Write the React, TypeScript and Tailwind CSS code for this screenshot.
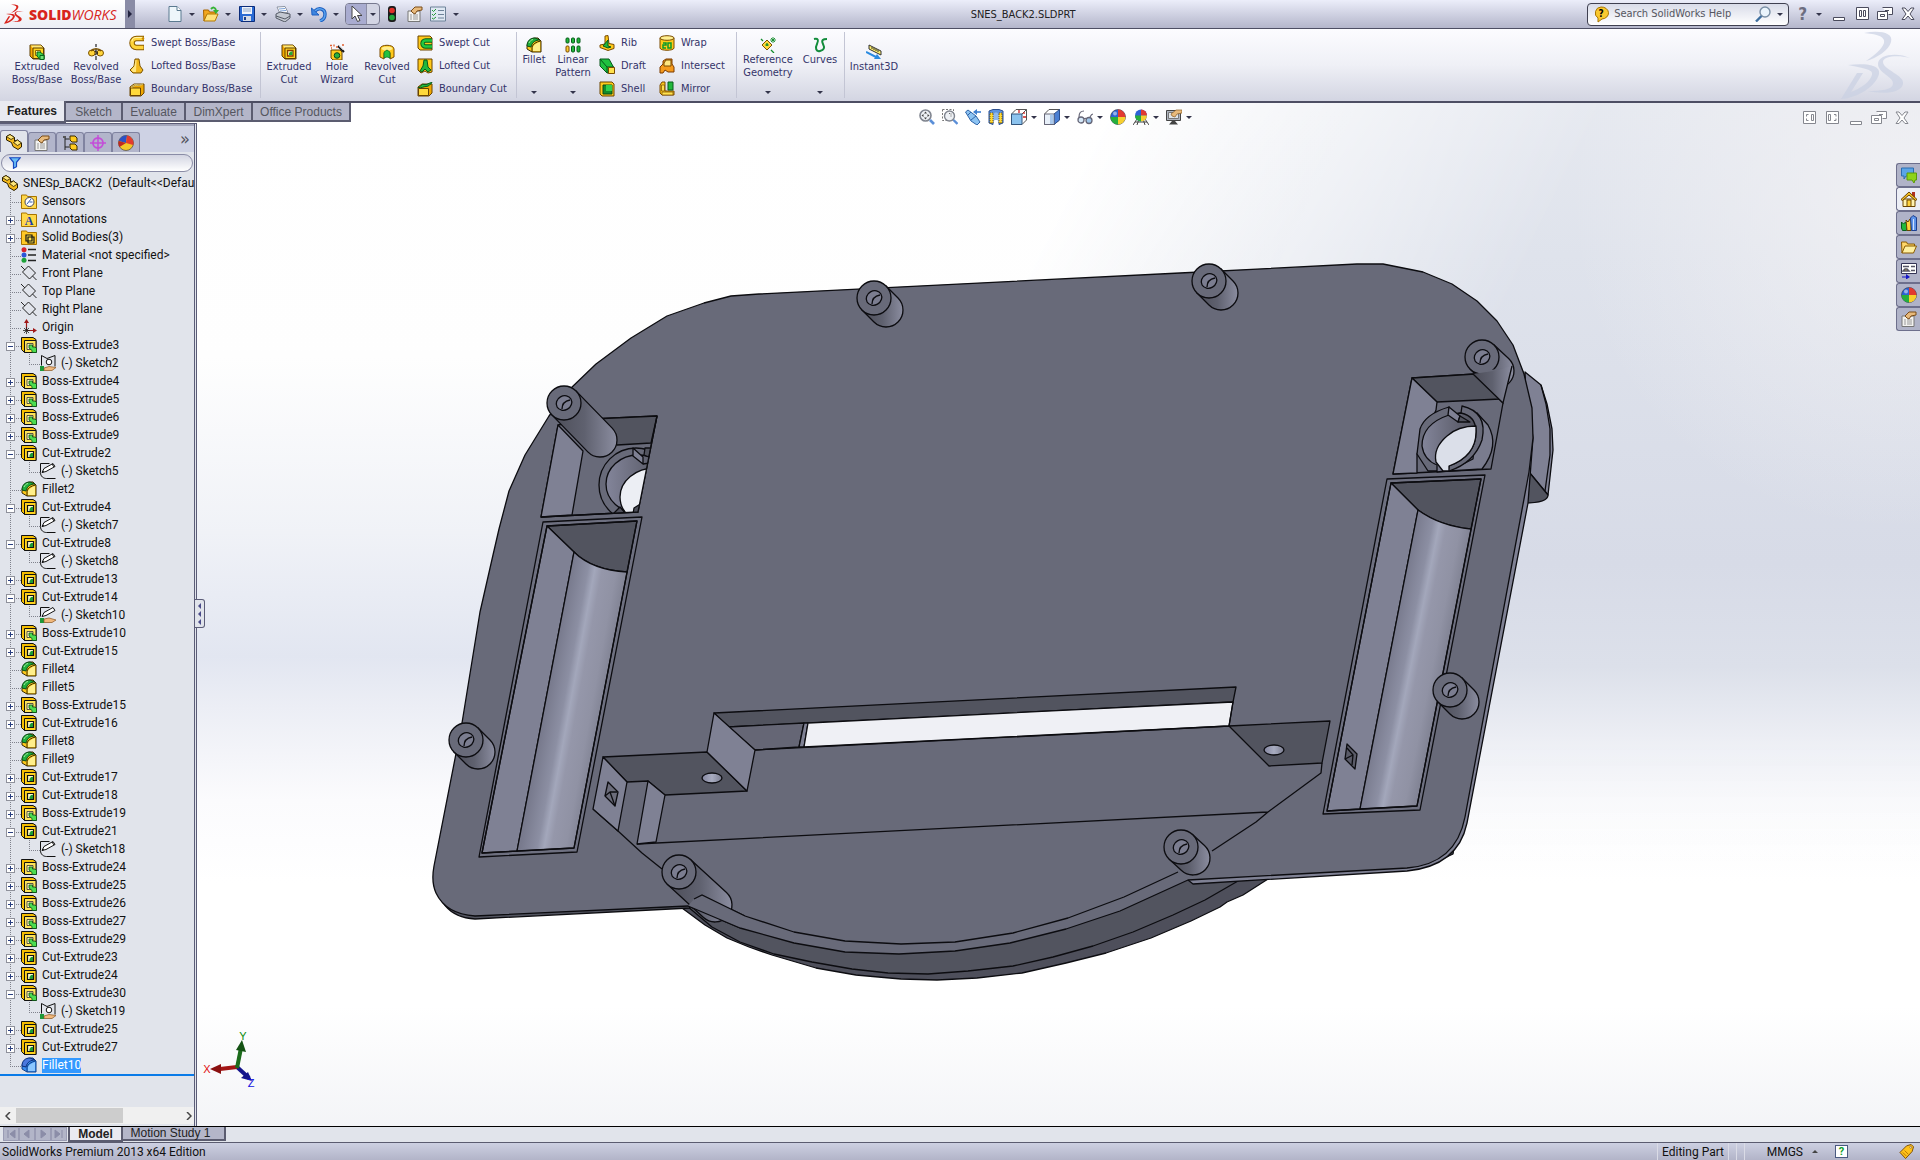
import { Fragment, useState } from "react";
import type { ReactNode } from "react";

type IconProps = { name: string; size?: number }

// all icons are drawn on a 16x16 grid
const icons: Record<string, ReactNode> = {
    bossExtrude: (
        <>
            <path d="M1 1h11l3 3v11H4L1 12z" fill="#f7a800" stroke="#5d3d00" />
            <path d="M1.500 1.500h10.500l2.500 2.500H4z" fill="#ffe97a" />
            <path d="M4 4h10.500v10.500H4z" fill="#ffd51f" stroke="#5d3d00" />
            <path d="M6.500 6.500h5v5h-5z" fill="#fff6a8" stroke="#8a6a00" />
            <path d="M8 8h3l4 3v4.500h-4L8 12z" fill="#3ccf4a" stroke="#06631a" />
            <path d="M11 11.500h4v4h-4z" fill="#6fe277" stroke="#06631a" />
        </>
    ),
    cutExtrude: (
        <>
            <path d="M1 1h11l3 3v11H4L1 12z" fill="#f7a800" stroke="#5d3d00" />
            <path d="M1.500 1.500h10.500l2.500 2.500H4z" fill="#ffe97a" />
            <path d="M4 4h10.500v10.500H4z" fill="#ffd51f" stroke="#5d3d00" />
            <path d="M6.500 6.500h5.500v5.500h-5.500z" fill="#fff3b0" stroke="#8a3d00" strokeWidth="1.300" />
            <path d="M8 9l2-1.500h1.500V11H8z" fill="#1fa83a" />
        </>
    ),
    treeBoss: (
        <>
            <path d="M.5 .5h11.500l3 2v13H3.500L.5 12.500z" fill="#f5bd00" stroke="#111" />
            <path d="M3.500 3.500h11.500v12H3.500z" fill="#ffe45a" stroke="#111" />
            <path d="M6 6.500h6v6h-6z" fill="#fff7b8" stroke="#333" strokeWidth=".8" />
            <path d="M8 8h3.500v2H14l1.500 1.500v4h-4.500v-2L8 11z" fill="#4ddd50" stroke="#0a4d12" strokeWidth=".8" />
        </>
    ),
    treeCut: (
        <>
            <path d="M.5 .5h11.500l3 2v13H3.500L.5 12.500z" fill="#f5bd00" stroke="#111" />
            <path d="M3.500 3.500h11.500v12H3.500z" fill="#ffd21c" stroke="#111" />
            <path d="M6.500 6.500h6v6h-6z" fill="#fff7c8" stroke="#111" strokeWidth="1.200" />
            <path d="M8.500 10l1.500-2h2v4H8.500z" fill="#1a9c33" />
        </>
    ),
    fillet: (
        <>
            <path d="M1 10c0-5 3-9 9-9h2l3 3v11H6L1 12z" fill="#ffc91a" stroke="#3a2a00" />
            <path d="M1 9c0-5 3-8 8-8l5 2c-4 0-8 2-9 7z" fill="#1fae3c" stroke="#0b4b18" />
            <path d="M3 6c1-2 2-3 4-3.500" stroke="#a5f0a0" fill="none" />
            <path d="M6 15V10c1-3 4-5 8.500-6" fill="none" stroke="#3a2a00" />
            <path d="M7 14v-4c1-2 3-4 7-5v9z" fill="#ffef8a" />
        </>
    ),
    filletBlue: (
        <>
            <path d="M1 10c0-5 3-9 9-9h2l3 3v11H6L1 12z" fill="#3b8ef0" stroke="#10408a" />
            <path d="M1 9c0-5 3-8 8-8l5 2c-4 0-8 2-9 7z" fill="#4b78dd" stroke="#0c2f78" />
            <path d="M6 15V10c1-3 4-5 8.500-6" fill="none" stroke="#10408a" />
            <path d="M7 14v-4c1-2 3-4 7-5v9z" fill="#8cc7ff" />
        </>
    ),
    revolve: (
        <>
            <path d="M8 0v3M8 5v5M8 12v4" stroke="#222" strokeWidth="1.200" />
            <ellipse cx="3.800" cy="9" rx="3.300" ry="3" fill="#ffd43a" stroke="#7a5200" />
            <ellipse cx="12.200" cy="9" rx="3.300" ry="3" fill="#ffd43a" stroke="#7a5200" />
            <path d="M3 7c2-3 8-3 10 0" fill="none" stroke="#7a5200" strokeWidth="1.600" />
            <path d="M7 7l3 2-3 2" fill="none" stroke="#222" />
        </>
    ),
    swept: (
        <>
            <path d="M15 3.500H7.500a4.500 4.500 0 0 0 0 9H15" fill="none" stroke="#8a5a00" strokeWidth="5.500" />
            <path d="M14.500 3.500H7.500a4.500 4.500 0 0 0 0 9h7" fill="none" stroke="#ffd43a" strokeWidth="3.500" />
            <path d="M14 2.500H7c-3 0-4 2-4 4" fill="none" stroke="#fff3a8" />
            <circle cx="14" cy="3.500" r="1.300" fill="#c98a00" />
        </>
    ),
    lofted: (
        <>
            <path d="M6 1h4l1 7 3 4-2 3H4l-3-3 4-4z" fill="#f2b81c" stroke="#7a5200" />
            <path d="M6.500 2h1l-.500 12H4l-2-2 3.500-4z" fill="#ffe680" />
        </>
    ),
    boundary: (
        <>
            <path d="M1 6l4-3h10v9l-3 3H1z" fill="#f0a800" stroke="#6a4400" />
            <path d="M1.500 7h10v7.500h-10z" fill="#ffd93b" stroke="#6a4400" />
            <path d="M2 6c3 0 3-3 6-2s4-1 6-1" fill="none" stroke="#fff09a" strokeWidth="1.500" />
            <path d="M2 6c3 0 3-3 6-2s4-1 6-1" fill="none" stroke="#6a4400" strokeWidth=".6" />
        </>
    ),
    hole: (
        <>
            <path d="M2 6h9l2 2v8H4l-2-2z" fill="#ffcb1f" stroke="#6a4400" />
            <circle cx="8" cy="11.500" r="2.800" fill="#29b33f" stroke="#06461a" />
            <path d="M9 2l6 6" stroke="#111" strokeWidth="2" />
            <path d="M10 2l4 4" stroke="#fff" strokeWidth=".6" />
            <path d="M1 1.500h2M5 .5v2M7 3h2M2 4h1M13 1h2" stroke="#e06030" strokeWidth="1.300" />
        </>
    ),
    revolveCut: (
        <>
            <path d="M1 5c0-5 14-5 14 0v8l-4 2V9L8 6 5 9v6l-4-2z" fill="#ffc91a" stroke="#7a4b00" />
            <ellipse cx="8" cy="4.500" rx="5.500" ry="2" fill="#ffee90" />
            <path d="M5 14V8l3-2 3 2v6l-3-1z" fill="#23c13f" stroke="#0b6a20" strokeWidth=".7" />
        </>
    ),
    sweptCut: (
        <>
            <path d="M1 1h12l2 2v12H3l-2-2z" fill="#ffc91a" stroke="#6a4400" />
            <path d="M15 5.500H8.500a3 3 0 0 0 0 6H15" fill="none" stroke="#075c1b" strokeWidth="4.400" />
            <path d="M15 5.500H8.500a3 3 0 0 0 0 6H15" fill="none" stroke="#22c840" strokeWidth="2.600" />
        </>
    ),
    loftedCut: (
        <>
            <path d="M1 1h14v13l-4 1-3-2-4 2-3-3z" fill="#ffc91a" stroke="#6a4400" />
            <path d="M7 2h3l1 7 3 3-3 2-3-3-3 3-2-1 3-5z" fill="#22b83c" stroke="#075c1b" />
        </>
    ),
    boundaryCut: (
        <>
            <path d="M1 6l4-3h10v9l-3 3H1z" fill="#f0a800" stroke="#6a4400" />
            <path d="M1.500 7.500h10v7h-10z" fill="#ffd93b" stroke="#6a4400" />
            <path d="M1 6.500c3 0 3-4 6-3s5-2 8-2c-2 2-3 4-6 4s-4 2-8 1z" fill="#25bd40" stroke="#075c1b" />
        </>
    ),
    pattern: (
        <>
            {[1, 6.500, 12].map(x => (
                <Fragment key={x}>
                    <rect x={x} y="1" width="3" height="5" rx="1" fill="#22b83c" stroke="#075c1b" />
                    <rect x={x} y="9" width="3" height="6" rx="1" fill={x === 1 ? "#ffcc33" : "#22b83c"} stroke={x === 1 ? "#7a4b00" : "#075c1b"} />
                </Fragment>
            ))}
        </>
    ),
    rib: (
        <>
            <path d="M1 10l5-1V1l3-.500 1 8 5 1v4l-6 2-8-3z" fill="#ffc91a" stroke="#7a4b00" />
            <path d="M4 11l5-6v6l3 1-3 1z" fill="#22b83c" stroke="#075c1b" />
        </>
    ),
    draft: (
        <>
            <path d="M1 1h9l5 9v5H8L1 8z" fill="#1fc23f" stroke="#06551a" />
            <path d="M1 1l7 8v6M8 9h7" fill="none" stroke="#06551a" />
            <path d="M9.500 9.500h6v6h-6z" fill="#ffe14d" stroke="#7a4b00" />
        </>
    ),
    shell: (
        <>
            <path d="M1 1h12l2 2v12H3l-2-2z" fill="#ffc91a" stroke="#6a4400" />
            <path d="M4 4h9v9H4z" fill="#128c2b" stroke="#0b4b18" />
            <path d="M7 4h6v6H7z" fill="#2fd04d" />
        </>
    ),
    wrap: (
        <>
            <path d="M1 3v10c0 3 14 3 14 0V3z" fill="#ffc91a" stroke="#7a4b00" />
            <ellipse cx="8" cy="3" rx="7" ry="2.300" fill="#ffef90" stroke="#7a4b00" />
            <path d="M4 8h3v2H4v3h3M9 8h3v5H9z" fill="none" stroke="#0b9a2a" strokeWidth="1.500" />
        </>
    ),
    intersect: (
        <>
            <path d="M1 9l3-3V3l3-2h6v5l2 3v5H9l-3-2-2 3H1z" fill="#f59a1c" stroke="#7a3a00" />
            <path d="M5 5l2-3h5v6H5z" fill="#ffe680" stroke="#7a4b00" />
        </>
    ),
    mirror: (
        <>
            <path d="M1 4l2-3h3v9h9v4H3l-2-2z" fill="#ffc91a" stroke="#7a4b00" />
            <path d="M9 1h5v8H9z" fill="#22b83c" stroke="#075c1b" />
            <path d="M2.500 4h3v6h-3zM3 11h11v3H3z" fill="#ffe14d" stroke="#7a4b00" strokeWidth=".7" />
        </>
    ),
    refGeo: (
        <>
            <path d="M7 3l5 5-5 5-5-5z" fill="#ffd83b" stroke="#7a5200" />
            <path d="M1 2l2 2M11 13l3 3M7 6v3M5.500 8h3" stroke="#128c2b" strokeWidth="1.300" />
            <path d="M13 0v6M10 3h6M11 1l4 4M15 1l-4 4" stroke="#128c2b" strokeWidth=".9" />
        </>
    ),
    curves: <path d="M2 2c4-1 5 1 3 5s-1 8 3 7 5-3 3-7 0-5 4-5" fill="none" stroke="#128c3b" strokeWidth="2" />,
    instant3d: (
        <>
            <path d="M3 1l12 6v4L3 5z" fill="#fff06a" stroke="#333" />
            <path d="M6 3v2M8 4v2M10 5v2M12 6v2" stroke="#333" />
            <path d="M0 8l10 5" stroke="#2a8ae0" strokeWidth="2" />
            <path d="M15 15l-7 0 3-5z" fill="#2a8ae0" />
        </>
    ),
    newDoc: (
        <>
            <path d="M2 .5h8l4 4v11H2z" fill="#eef6fb" stroke="#5b7a90" />
            <path d="M10 .5v4h4" fill="#fff" stroke="#5b7a90" />
        </>
    ),
    open: (
        <>
            <path d="M.5 4h5l1 2h6v3H4l-3 6z" fill="#f2a71f" stroke="#a86400" />
            <path d="M4 8h11l-3 7H1z" fill="#ffe27a" stroke="#b57800" />
            <path d="M8 3c2-2 4-2 5 1" fill="none" stroke="#35b335" strokeWidth="2" />
            <path d="M10 4h6l-3 4z" fill="#35b335" />
        </>
    ),
    save: (
        <>
            <path d="M.5 .5h15v15H2l-1.500-1.500z" fill="#2a6bd4" stroke="#0b2c7a" />
            <path d="M3 1h10v7H3z" fill="#eef3fb" />
            <path d="M4 3h8M4 5h8" stroke="#8fa6c8" />
            <path d="M4 10h8v5H4z" fill="#d5dbe6" />
            <path d="M5 11h2v3H5z" fill="#1b3f8a" />
        </>
    ),
    print: (
        <>
            <path d="M2 1l8-.500 3 6-8 1z" fill="#fff" stroke="#8b93a3" />
            <path d="M4 3l6-.500M5 5l6-.500" stroke="#79a0d8" />
            <path d="M1 8l4-2 10 2v4l-5 4-9-4z" fill="#c3c8d1" stroke="#555b66" />
            <path d="M1 10l9 3 5-3" fill="none" stroke="#555b66" />
        </>
    ),
    undo: (
        <>
            <path d="M4 5c4-4 10-2 10 3 0 3-2 6-5 7" fill="none" stroke="#1e5fc0" strokeWidth="3.400" />
            <path d="M4 5c4-4 10-2 10 3 0 3-2 6-5 7" fill="none" stroke="#5aa4f0" strokeWidth="1.400" />
            <path d="M.5 2l.500 7h7z" fill="#3d86e0" stroke="#1e5fc0" />
        </>
    ),
    cursor: <path d="M4 0v13l3-3 2.500 5.500 2.500-1L9.500 9.500H14z" fill="#fff" stroke="#444" />,
    traffic: (
        <>
            <rect x="4" y="0" width="8" height="16" rx="3" fill="#1c1c1c" />
            <circle cx="8" cy="4.500" r="2.800" fill="#e0302a" />
            <circle cx="8" cy="11.500" r="2.800" fill="#22a83a" />
        </>
    ),
    props: (
        <>
            <path d="M1 5h12v10.500H1z" fill="#f2f2f0" stroke="#777" />
            <path d="M3 9h2M6 9h5M3 11h2M6 11h5M3 13h2M6 13h5" stroke="#999" />
            <path d="M4 5l4-4 7 0v3l-5 1-2 3-2-1z" fill="#e8ba7c" stroke="#7a4c18" />
        </>
    ),
    options: (
        <>
            <path d="M.5 1h15v14H.5z" fill="#dfe8f3" stroke="#6d8298" />
            <path d="M2 4l1.500 1.500L6 3M2 8l1.500 1.500L6 7M2 12l1.500 1L6 11" fill="none" stroke="#219a35" />
            <path d="M8 4.500h6M8 8.500h6M8 12h6" stroke="#6d8298" />
        </>
    ),
    part: (
        <>
            <path d="M.5 2.500L4 .5l4.500 3v3.500l3-1 4 3v4L12 15.500l-5-3-1.500-4L.5 6z" fill="#f3b81a" stroke="#2a1e00" />
            <path d="M.5 2.500L4 .5l4.500 3L5 5.500zM7.500 8.500l4-2.500 4 3-4 2.500z" fill="#ffe77a" stroke="#2a1e00" strokeWidth=".8" />
        </>
    ),
    config: (
        <>
            <path d="M3 1v14M3 4h4M3 12h4" stroke="#222" fill="none" />
            <path d="M8 1l5 0 2 2v4h-5l-2-2zM8 9l5 0 2 2v4h-5l-2-2z" fill="#ffcb1f" stroke="#3a2a00" />
            <path d="M1 1h3v2H1z" fill="#555" />
        </>
    ),
    target: (
        <>
            <circle cx="8" cy="8" r="5" fill="none" stroke="#c34fd8" strokeWidth="1.800" />
            <path d="M8 0v16M0 8h16" stroke="#c34fd8" strokeWidth="1.500" />
        </>
    ),
    ball: (
        <>
            <circle cx="8" cy="8" r="7.500" fill="#2c62d6" stroke="#333" strokeWidth=".6" />
            <path d="M8 8V.5A7.500 7.500 0 0 1 15.500 8z" fill="#e23a30" />
            <path d="M8 8h7.500A7.500 7.500 0 0 1 8 15.500z" fill="#f7cf2f" />
            <path d="M8 8v7.500A7.500 7.500 0 0 1 .5 8z" fill="#27ae3d" />
            <circle cx="5" cy="4.500" r="2" fill="#fff" opacity=".5" />
        </>
    ),
    displayBall: (
        <>
            <circle cx="8" cy="8" r="7.500" fill="#f3c72a" stroke="#333" strokeWidth=".6" />
            <path d="M8 8L.8 6A7.500 7.500 0 0 1 9 .6z" fill="#2c50c6" />
            <path d="M8 8L9 .6A7.500 7.500 0 0 1 15.200 10z" fill="#e23a30" />
            <path d="M8 8L1.500 12A7.500 7.500 0 0 1 .8 6z" fill="#c02820" />
        </>
    ),
    scene: (
        <>
            <path d="M0 16l4-6h8l4 6M2 13h12M6 10l-2 6M10 10l2 6" fill="none" stroke="#444" />
            <circle cx="8" cy="6.500" r="6" fill="#2c62d6" />
            <path d="M8 6.500V.5a6 6 0 0 1 6 6z" fill="#e23a30" />
            <path d="M8 6.500h6a6 6 0 0 1-6 6z" fill="#f7cf2f" />
            <path d="M8 6.500v6a6 6 0 0 1-6-6z" fill="#27ae3d" />
        </>
    ),
    sensors: (
        <>
            <path d="M.5 2h5l1 1.500h9v12H.5z" fill="#ffd84a" stroke="#a87400" />
            <circle cx="8.500" cy="9" r="4.500" fill="#fff" stroke="#445" />
            <path d="M6 11l4-5M8.500 9l3 0" stroke="#2a58b0" />
        </>
    ),
    annotations: (
        <>
            <path d="M.5 2h5l1 1.500h9v12H.5z" fill="#ffd84a" stroke="#a87400" />
            <text x="8" y="14" textAnchor="middle" fontSize="12" fontWeight="700" fill="#1b3fa8" className="font-['Liberation_Serif',serif]">A</text>
        </>
    ),
    solidBodies: (
        <>
            <path d="M.5 2h5l1 1.500h9v12H.5z" fill="#ffc926" stroke="#a87400" />
            <path d="M5 6h6v6H5zM7 8h6v6H7z" fill="#ffe34d" stroke="#111" strokeWidth="1.200" />
        </>
    ),
    material: (
        <>
            <path d="M7 2.500h8M7 8h8M7 13.500h8" stroke="#222" strokeWidth="1.400" />
            <circle cx="3" cy="2.800" r="2.500" fill="#d8232a" />
            <circle cx="3" cy="8" r="2.500" fill="#2b55d8" />
            <circle cx="3" cy="13.200" r="2.500" fill="#1ea23a" />
        </>
    ),
    plane: <path d="M1.500 7l6-6 7 7-6 6zM0 1l4 4M11.500 11l4 4" fill="none" stroke="#222" />,
    origin: (
        <>
            <path d="M5.500 11V2M5.500 11.500H13" stroke="#a01818" strokeWidth="1.200" />
            <path d="M5.500 0L8 4H3zM16 11.500L12 9v5z" fill="#a01818" />
            <path d="M3 9l5 5M8 9l-5 5M5.500 8v7M2 11.500h7" stroke="#222" strokeWidth=".8" />
        </>
    ),
    sketch: (
        <>
            <path d="M.5 .5h9M.5 .5v9c0 4 3 6 6 6h9" fill="none" stroke="#111" />
            <path d="M2 9.500l2-4L13 .5l2 3-9 5z" fill="#fff" stroke="#111" />
            <path d="M12 1l2 3M2 9.500l2-1" stroke="#111" />
        </>
    ),
    sketchHeld: (
        <>
            <path d="M.5 .5h9M.5 .5v9" fill="none" stroke="#111" />
            <path d="M2 9.500l2-4L13 .5l2 3-9 5z" fill="#fff" stroke="#111" />
            <path d="M0 11h4v5H0z" fill="#1d9a3a" />
            <path d="M4 12l5-1 7 2-4 2.500H4z" fill="#f1b97d" stroke="#8a5420" strokeWidth=".7" />
        </>
    ),
    sketchShared: (
        <>
            <path d="M1.500 .5l5.500 3 8-3v11M1.500 .5v10" fill="none" stroke="#111" />
            <circle cx="9" cy="7" r="2.800" fill="#fff" stroke="#111" />
            <path d="M0 11h4v5H0z" fill="#1d9a3a" />
            <path d="M4 13l5-1.500 7 1-4 3H4z" fill="#f1b97d" stroke="#8a5420" strokeWidth=".7" />
        </>
    ),
    zoomFit: (
        <>
            <circle cx="6.500" cy="6.500" r="5.500" fill="#eef1f5" stroke="#80858f" strokeWidth="1.600" />
            <path d="M6.500 2.500l1.500 2H5zM6.500 10.500l1.500-2H5zM2.500 6.500l2-1.500v3zM10.500 6.500l-2-1.500v3z" fill="#444" />
            <path d="M11 11l4 4" stroke="#5b8fd8" strokeWidth="2.600" />
        </>
    ),
    zoomArea: (
        <>
            <path d="M.5 .5h11v11H.5z" fill="none" stroke="#777" strokeDasharray="2 1.500" />
            <circle cx="7.500" cy="7" r="5" fill="#eef1f5" stroke="#80858f" strokeWidth="1.400" />
            <path d="M7 4.500h2v4" stroke="#666" fill="none" strokeDasharray="1 1" />
            <path d="M11.500 11l4 4" stroke="#5b8fd8" strokeWidth="2.400" />
        </>
    ),
    prevView: (
        <>
            <path d="M.5 3L3 1l8 6 4 6-3 3-6-4z" fill="#8cc3f2" stroke="#2f64a8" />
            <path d="M3 6l3-3M6 11l5-4" stroke="#2f64a8" />
            <path d="M16 3h-5" stroke="#3d7fd0" strokeWidth="1.600" />
            <path d="M8 3l4-3v6z" fill="#3d7fd0" />
        </>
    ),
    section: (
        <>
            <path d="M1 2l4-1.500h6L15 2v12l-4 1.500V5H5v10.500L1 14z" fill="#5d93dd" stroke="#2b4f8f" />
            <path d="M5 5l2-1.500h2L11 5v7l-2-1H7l-2 1z" fill="#8fb8ea" />
            <path d="M2 4h3v10H2zM11 4h3v10h-3z" fill="#ffd936" stroke="#7a5a00" strokeDasharray="1 1" />
        </>
    ),
    viewOrient: (
        <>
            <path d="M.5 5l4.500-4.500h10.500V11L11 15.500H.5z" fill="#fff" stroke="#555" />
            <path d="M.5 5H11v10.500H.5z" fill="#8cc3ee" stroke="#33557c" />
            <path d="M11 5l4.500-4.500" stroke="#555" />
            <path d="M8 1v3M12 8h3M13 3v2" stroke="#c22" strokeWidth="1.300" />
        </>
    ),
    displayStyle: (
        <>
            <path d="M.5 5l4.500-4.500h10.500V11L10 15.500H.5z" fill="#fff" stroke="#555" />
            <path d="M10 5l5.500-4.500V11L10 15.500z" fill="#4a7fd4" stroke="#2b4f8f" />
            <path d="M.5 5H10v10.500H.5z" fill="#e8f0f9" stroke="#667" />
            <path d="M6 5.500h3.500V15H6z" fill="#a9c8ec" />
        </>
    ),
    glasses: (
        <>
            <circle cx="4" cy="11" r="3" fill="#d4e8f8" stroke="#667" strokeWidth="1.300" />
            <circle cx="12" cy="11.500" r="3" fill="#9ec6ea" stroke="#667" strokeWidth="1.300" />
            <path d="M7 10c1-1 2-1 2 0M2 8c0-4 2-6 5-6M13 8c1-2 2-3 3-3" fill="none" stroke="#667" strokeWidth="1.200" />
        </>
    ),
    monitor: (
        <>
            <path d="M.5 1.500h14v10H.5z" fill="#aeb4bf" stroke="#444" />
            <path d="M2.500 3.500h10v6h-10z" fill="#dfe4ea" stroke="#777" />
            <path d="M3 15.500l3-3.500h3l3 3.500z" fill="#444" />
            <path d="M5 5l5-4h6v3l-5 1-2 3-3-1z" fill="#e8ba7c" stroke="#8a5a20" strokeWidth=".7" />
        </>
    ),
    forum: (
        <>
            <path d="M.5 1h12v8H5l-2 3V9H.5z" fill="#5ba5e6" stroke="#2b6db0" />
            <path d="M6 6h9.500v7H14l-1 3-2-3H6z" fill="#8ed31a" stroke="#5a9a08" />
        </>
    ),
    home: (
        <>
            <path d="M11 1h3v5h-3z" fill="#b03020" />
            <path d="M2 8h12v7.500H2z" fill="#fff3b0" stroke="#6a4400" />
            <path d="M0 8.500L8 1l8 7.500-1.500 1L8 4 1.500 9.500z" fill="#f7c024" stroke="#6a4400" />
            <path d="M6 9h4v6.500H6z" fill="#ffd23a" stroke="#6a4400" />
        </>
    ),
    library: (
        <>
            <path d="M.5 7l2 2 2-2 1 2v6.500h-4L.5 13z" fill="#22b83c" stroke="#075c1b" />
            <path d="M5 5l2 2 2-3 1 2v9.500H6z" fill="#ffd23a" stroke="#6a4400" />
            <path d="M9.500 3L12 .5l3.500 2v13h-5z" fill="#5d93e8" stroke="#1d3f8f" />
            <path d="M12.500 4v11" stroke="#cfe0ff" />
        </>
    ),
    folder: (
        <>
            <path d="M.5 3h5l1 2h7v4H4l-3 5z" fill="#ffd76a" stroke="#8a5a00" />
            <path d="M4 7h11.500l-3 7H1z" fill="#fff0a0" stroke="#8a5a00" />
        </>
    ),
    palette: (
        <>
            <path d="M.5 .5h15v10H.5z" fill="#fff" stroke="#335" />
            <path d="M2 3.500h6M10 3.500h4M2 8l2-2 2 0 2 2zM10 7.500h4" stroke="#556" strokeWidth="1.500" fill="#ffd23a" />
            <path d="M1 13.500h4V11l4 3-4 2.500v-2H1z" fill="#1616c8" />
        </>
    ),
    search: (
        <>
            <circle cx="10" cy="6" r="5" fill="#eaf4fc" stroke="#7a8fa5" strokeWidth="1.400" />
            <path d="M6.500 10L1 15.500" stroke="#3f6f9f" strokeWidth="2.400" />
        </>
    ),
    tag: (
        <>
            <path d="M1 9l7-7 5-1.500L15.500 3 14 8l-7 7.500z" fill="#ffc21a" stroke="#7a4b00" />
            <circle cx="12.500" cy="3.500" r="1" fill="#fff" stroke="#7a4b00" strokeWidth=".6" />
            <path d="M4 9l4 4M6 7l4 4" stroke="#b37400" />
        </>
    ),
    funnel: <path d="M1 1h14l-5 6v6l-4 2V7z" fill="#69bdf5" stroke="#1748c0" strokeWidth="1.600" />,
    min: <path d="M2.500 11.500h11v3h-11z" fill="#fff" stroke="currentColor" />,
    pause: <path d="M2.500 1.500h12v12h-12zM5.500 4.500h2v6h-2zM9.500 4.500h2v6h-2z" fill="#fff" stroke="currentColor" />,
    restore: <path d="M5.500 1.500h10v7h-4M.5 5.500h10v8H.5zM3.500 8.500h4v2h-4zM8 4.500h4" fill="#fff" stroke="currentColor" />,
    close: <path d="M2 2h3l3 3.500L11 2h3l-4 6 4 5.500h-3L8 10l-3 3.500H2L6 8z" fill="#fff" stroke="currentColor" />,
    paneLeft: <path d="M1.500 1.500h12v12h-12zM6.500 4.500h-2v2M6.500 10.500h-2v-2M9.500 4.500h2v6h-2z" fill="#fff" stroke="currentColor" />,
    paneRight: <path d="M1.500 1.500h12v12h-12zM3.500 4.500h2v6h-2zM9 4.500h2v2M9 10.500h2v-2" fill="#fff" stroke="currentColor" />,
}

const Icon = ({ name, size = 16 }: IconProps) => (
    <svg width={size} height={size} viewBox="0 0 16 16" className="shrink-0" aria-hidden="true">
        {icons[name]}
    </svg>
)

const Caret = () => (
    <span className="h-0 w-0 shrink-0 border-x-[3px] border-t-[3px] border-x-transparent border-t-[#33344a]" />
)

/* ---------- title bar ---------- */

const DsMark = ({ className }: { className: string }) => (
    <svg viewBox="0 0 72 70" className={className} fill="currentColor" aria-hidden="true">
        <path d="M24 3c14-3 30-1 27 9-2 8-14 16-25 19 9-6 16-12 18-18 2-7-9-9-20-10z" />
        <path d="M8 35c16-2 33-1 31 9C36 56 18 68 1 69L17 43h6L11 62c10-4 19-10 21-17 2-6-10-7-24-10z" />
        <path d="M70 28c-12-3-27-2-27 4 0 8 22 13 20 22-2 10-22 10-35 7 13 0 24-1 25-7 1-7-15-11-15-20 0-10 20-12 32-6z" />
    </svg>
)

const fileTools = [
    { icon: "newDoc", label: "New" },
    { icon: "open", label: "Open" },
    { icon: "save", label: "Save" },
    { icon: "print", label: "Print" },
    { icon: "undo", label: "Undo" },
]

function TitleBar() {
    return (
        <header className="flex h-[29px] items-center border-b border-[#4d4e63] bg-linear-to-b from-[#eceefa] to-[#b4b6cb]">
            <div className="flex h-full w-[125px] items-center gap-[4px] bg-linear-to-b from-white to-[#eceef5] pl-[3px] text-[#d8251d]">
                <DsMark className="h-[20px] w-[22px]" />
                <p className="pt-[2px] font-['Open_Sans',sans-serif] text-[14px] leading-none">
                    <b className="font-extrabold">SOLID</b><i>WORKS</i>
                </p>
            </div>
            <button aria-label="Menu" className="flex h-full w-[10px] items-center justify-center bg-[#8a8ca6]">
                <span className="border-y-4 border-l-4 border-y-transparent border-l-[#22233f]" />
            </button>

            <div className="ml-[32px] flex items-center">
                {fileTools.map(tool => (
                    <button key={tool.icon} aria-label={tool.label} className="flex w-9 items-center gap-[6px]">
                        <Icon name={tool.icon} />
                        <Caret />
                    </button>
                ))}
                <div className="-ml-[2px] flex h-[22px] items-center rounded-[4px] border border-[#77798f] bg-[#d3d5e4]">
                    <button aria-label="Select" className="flex h-full w-[21px] items-center justify-center rounded-l-[3px] border-r border-[#8c8ea6] bg-[#a9acd0]">
                        <Icon name="cursor" />
                    </button>
                    <button aria-label="Select options" className="flex w-[12px] justify-center"><Caret /></button>
                </div>
                <div className="ml-[4px] flex items-center gap-[7px]">
                    <button aria-label="Rebuild"><Icon name="traffic" /></button>
                    <button aria-label="File properties"><Icon name="props" /></button>
                    <button aria-label="Options" className="flex items-center gap-[7px]">
                        <Icon name="options" />
                        <Caret />
                    </button>
                </div>
            </div>

            <h1 className="flex-1 pt-[2px] text-center text-[11px] text-[#222]">SNES_BACK2.SLDPRT</h1>

            <div className="flex h-[23px] w-[202px] items-center rounded-[4px] border border-[#3f4050] bg-linear-to-b from-[#d9dce9] to-white px-[5px]">
                <svg width="17" height="17" viewBox="0 0 17 17" aria-hidden="true">
                    <path d="M8 1a7 6 0 0 1 1 12l-4 3v-4A6 6 0 0 1 8 1z" fill="#f9c92f" stroke="#a87400" />
                    <text x="8" y="11" textAnchor="middle" fontSize="10" fontWeight="700">?</text>
                </svg>
                <input aria-label="Search SolidWorks Help" placeholder="Search SolidWorks Help" className="ml-[4px] min-w-0 flex-1 bg-transparent text-[11px] outline-none placeholder:text-[#55565f]" />
                <Icon name="search" />
                <span className="ml-[6px] flex"><Caret /></span>
            </div>

            <div className="mr-[4px] ml-[9px] flex items-center text-[#4a4b5c]">
                <button aria-label="Help" className="flex items-center gap-[9px] text-[17px] leading-none font-bold text-[#6d6e80]">
                    ?<Caret />
                </button>
                <div className="ml-[9px] flex items-center gap-[7px]">
                    <button aria-label="Minimize"><Icon name="min" /></button>
                    <button aria-label="Tile"><Icon name="pause" /></button>
                    <button aria-label="Restore"><Icon name="restore" /></button>
                    <button aria-label="Close"><Icon name="close" /></button>
                </div>
            </div>
        </header>
    )
}

/* ---------- ribbon ---------- */

type BigProps = { icon: string; lines: string[]; width: string; menu?: boolean }

const Big = ({ icon, lines, width, menu }: BigProps) => (
    <button className={`flex h-full flex-col items-center ${menu ? "pt-[8px]" : "pt-[15px]"} ${width}`}>
        <Icon name={icon} />
        <span className="text-center leading-[13px] whitespace-nowrap">
            {lines.map(line => <span key={line} className="block">{line}</span>)}
        </span>
        {menu && <span className="mt-auto mb-[7px] flex"><Caret /></span>}
    </button>
)

const Stack = ({ items, width }: { items: [string, string][]; width: string }) => (
    <div className={`flex flex-col gap-[7px] pt-[6px] ${width}`}>
        {items.map(([icon, label]) => (
            <button key={label} className="flex h-4 items-center gap-[6px] whitespace-nowrap">
                <Icon name={icon} />
                {label}
            </button>
        ))}
    </div>
)

const Separator = () => <div className="my-[3px] w-px shrink-0 bg-[#c3c5d4]" />

function Ribbon() {
    return (
        <div className="relative flex h-[74px] overflow-hidden border-b-2 border-[#4d4e63] bg-linear-to-b from-[#fcfcff] via-[#eff0f6] to-[#d3d5e2] pl-[8px] text-[11px] text-[#34346a]">
            <Big icon="bossExtrude" lines={["Extruded", "Boss/Base"]} width="w-[58px]" />
            <Big icon="revolve" lines={["Revolved", "Boss/Base"]} width="w-[60px]" />
            <Stack width="ml-[3px] w-[131px]" items={[["swept", "Swept Boss/Base"], ["lofted", "Lofted Boss/Base"], ["boundary", "Boundary Boss/Base"]]} />
            <Separator />
            <Big icon="cutExtrude" lines={["Extruded", "Cut"]} width="w-[56px]" />
            <Big icon="hole" lines={["Hole", "Wizard"]} width="w-[40px]" />
            <Big icon="revolveCut" lines={["Revolved", "Cut"]} width="w-[60px]" />
            <Stack width="w-[99px]" items={[["sweptCut", "Swept Cut"], ["loftedCut", "Lofted Cut"], ["boundaryCut", "Boundary Cut"]]} />
            <Separator />
            <Big icon="fillet" lines={["Fillet"]} width="w-[34px]" menu />
            <Big icon="pattern" lines={["Linear", "Pattern"]} width="w-[44px]" menu />
            <Stack width="ml-[4px] w-[60px]" items={[["rib", "Rib"], ["draft", "Draft"], ["shell", "Shell"]]} />
            <Stack width="w-[77px]" items={[["wrap", "Wrap"], ["intersect", "Intersect"], ["mirror", "Mirror"]]} />
            <Separator />
            <Big icon="refGeo" lines={["Reference", "Geometry"]} width="w-[62px]" menu />
            <Big icon="curves" lines={["Curves"]} width="w-[42px] mr-[3px]" menu />
            <Separator />
            <Big icon="instant3d" lines={["Instant3D"]} width="w-[58px]" />
            <DsMark className="mr-[8px] ml-auto h-[72px] w-[72px] text-[#c9d0e2]/70" />
        </div>
    )
}

/* ---------- feature tree ---------- */

type Node = { label: string; icon: string; box?: "+" | "-"; child?: boolean; selected?: boolean }

const boss = (n: number, box: "+" | "-" = "+"): Node => ({ label: `Boss-Extrude${n}`, icon: "treeBoss", box })
const cut = (n: number, box: "+" | "-" = "+"): Node => ({ label: `Cut-Extrude${n}`, icon: "treeCut", box })
const fillet = (n: number): Node => ({ label: `Fillet${n}`, icon: "fillet" })
const sketch = (n: number, icon = "sketch"): Node => ({ label: `(-) Sketch${n}`, icon, child: true })

const nodes: Node[] = [
    { label: "Sensors", icon: "sensors" },
    { label: "Annotations", icon: "annotations", box: "+" },
    { label: "Solid Bodies(3)", icon: "solidBodies", box: "+" },
    { label: "Material <not specified>", icon: "material" },
    { label: "Front Plane", icon: "plane" },
    { label: "Top Plane", icon: "plane" },
    { label: "Right Plane", icon: "plane" },
    { label: "Origin", icon: "origin" },
    boss(3, "-"), sketch(2, "sketchShared"),
    boss(4), boss(5), boss(6), boss(9),
    cut(2, "-"), sketch(5),
    fillet(2),
    cut(4, "-"), sketch(7),
    cut(8, "-"), sketch(8),
    cut(13),
    cut(14, "-"), sketch(10, "sketchHeld"),
    boss(10), cut(15), fillet(4), fillet(5),
    boss(15), cut(16), fillet(8), fillet(9),
    cut(17), cut(18), boss(19),
    cut(21, "-"), sketch(18),
    boss(24), boss(25), boss(26), boss(27), boss(29),
    cut(23), cut(24),
    boss(30, "-"), sketch(19, "sketchShared"),
    cut(25), cut(27),
    { label: "Fillet10", icon: "filletBlue", selected: true },
]

const Branch = ({ node }: { node: Node }) => (
    <svg width={node.child ? 40 : 21} height="18" className="shrink-0" aria-hidden="true">
        <path
            d={`M10.500 0V${node.selected ? 9 : 18}${node.child ? "M29.500 0V10M29 10.500H40" : "M10 10.500H21"}`}
            fill="none" stroke="#80828c" strokeDasharray="1 1"
        />
        {node.box && (
            <>
                <rect x="6.500" y="6.500" width="8" height="8" fill="#fff" stroke="#8f919b" />
                <path d={node.box === "+" ? "M8 10.500h5M10.500 8v5" : "M8 10.500h5"} stroke="#2a3f80" />
            </>
        )}
    </svg>
)

const panelTabs = ["part", "props", "config", "target", "displayBall"]

function FeatureManager() {
    const [active, setActive] = useState("part")

    return (
        <div className="relative flex min-h-0 flex-1 flex-col border-t border-r-[3px] border-double border-[#5b5c77] bg-[#e1e4eb]">
            <div className="flex h-[28px] items-end border-t-2 border-[#a3a6bb] bg-[#ced2e4]">
                {panelTabs.map(tab => (
                    <button
                        key={tab}
                        onClick={() => setActive(tab)}
                        aria-label={tab}
                        className={`flex w-[28px] items-center justify-center rounded-t-[3px] border border-b-0 border-[#8083a0] ${tab === active ? "h-[22px] bg-[#e1e4eb]" : "h-[20px] bg-[#b2b5cb]"}`}
                    >
                        <Icon name={tab} />
                    </button>
                ))}
                <button aria-label="More tabs" className="mr-[4px] ml-auto pb-[4px] text-[18px] leading-none text-[#55565f]">»</button>
            </div>

            <label className="mx-[1px] mt-[2px] flex h-[18px] items-center rounded-full border border-[#8a8ca6] bg-linear-to-b from-[#d3d5e2] to-white pl-[7px]">
                <Icon name="funnel" size={12} />
                <input aria-label="Filter" className="ml-1 min-w-0 flex-1 bg-transparent text-[12px] outline-none" />
            </label>

            <ul className="flex-1 overflow-hidden pt-[2px] font-['Roboto',sans-serif] text-[12px] text-[#111]">
                <li className="flex h-[18px] items-center gap-[5px] pl-[2px] whitespace-pre">
                    <Icon name="part" />
                    <span>SNESp_BACK2  (Default&lt;&lt;Defau</span>
                </li>
                {nodes.map(node => (
                    <li key={node.label} className="flex h-[18px] items-center whitespace-nowrap">
                        <Branch node={node} />
                        <Icon name={node.icon} />
                        <span className={node.selected ? "ml-[5px] bg-[#3399ff] leading-[15px] text-white" : "ml-[5px]"}>{node.label}</span>
                    </li>
                ))}
                <li className="h-[2px] bg-[#0a7be8]" />
            </ul>

            <div className="mb-[2px] flex h-[17px] items-center bg-[#f0f0f0] text-[#444]">
                <button aria-label="Scroll left" className="flex w-4 justify-center">
                    <svg width="6" height="8" viewBox="0 0 6 8"><path d="M5 0L1 4l4 4" fill="none" stroke="currentColor" strokeWidth="1.500" /></svg>
                </button>
                <div className="h-[15px] w-[107px] bg-[#cdcdcd]" />
                <button aria-label="Scroll right" className="ml-auto flex w-[11px] justify-center">
                    <svg width="6" height="8" viewBox="0 0 6 8"><path d="M1 0l4 4-4 4" fill="none" stroke="currentColor" strokeWidth="1.500" /></svg>
                </button>
            </div>

            <button aria-label="Collapse panel" className="absolute top-[475px] -right-[11px] z-10 flex h-[29px] w-[10px] flex-col items-center justify-center gap-[2px] rounded-r-[3px] border border-l-0 border-[#5b5c77] bg-[#e1e4eb]">
                {[0, 1, 2].map(i => <span key={i} className="border-y-[3px] border-r-[3px] border-y-transparent border-r-[#4a4b8a]" />)}
            </button>
        </div>
    )
}

/* ---------- model ---------- */

type PegProps = { x: number; y: number; dx?: number; dy?: number; r?: number }

// boss with a screw hole: hull of the face circle and its base
const Peg = ({ x, y, dx = 12, dy = 12, r = 17 }: PegProps) => {
    const len = Math.hypot(dx, dy)
    const nx = (-dy / len) * r
    const ny = (dx / len) * r

    return (
        <g stroke="#0c0c10" strokeWidth="1.300">
            <path
                d={`M${x - nx} ${y - ny}L${x + dx - nx} ${y + dy - ny}A${r} ${r} 0 0 1 ${x + dx + nx} ${y + dy + ny}L${x + nx} ${y + ny}z`}
                fill="url(#peg)"
            />
            <circle cx={x} cy={y} r={r} fill="#686a79" />
            <ellipse cx={x} cy={y} rx="8" ry="7" fill="#7b7d90" transform={`rotate(-30 ${x} ${y})`} />
            <path d={`M${x - 2} ${y + 6}c0-5 3-8 8-9`} fill="none" />
        </g>
    )
}

const MAIN = "#686a79"
const LIGHT = "#7f8194"
const DARK = "#52545f"

function Model() {
    return (
        <svg viewBox="197 103 1723 1023" preserveAspectRatio="xMidYMid slice" className="block h-full w-full" role="img" aria-label="Part model">
            <defs>
                <linearGradient id="band" x1="0" y1="0" x2="0" y2="1">
                    <stop offset="0" stopColor="#fff" />
                    <stop offset=".25" stopColor="#fefefe" />
                    <stop offset=".42" stopColor="#f0f2f7" />
                    <stop offset=".54" stopColor="#e2e6f1" />
                    <stop offset=".59" stopColor="#eceef5" />
                    <stop offset=".68" stopColor="#fbfbfd" />
                    <stop offset=".76" stopColor="#fff" />
                    <stop offset=".88" stopColor="#fff" />
                    <stop offset="1" stopColor="#f3f4f7" />
                </linearGradient>
                <linearGradient id="sky" x1="0" y1="0" x2="0" y2="1">
                    <stop offset="0" stopColor="#e6e9f0" />
                    <stop offset=".15" stopColor="#dfe3ec" />
                    <stop offset=".45" stopColor="#d7dbe7" />
                    <stop offset=".55" stopColor="#dce0ea" />
                    <stop offset=".62" stopColor="#eceef4" />
                    <stop offset=".74" stopColor="#fff" stopOpacity="0" />
                </linearGradient>
                <linearGradient id="fade" gradientUnits="userSpaceOnUse" x1="1130" y1="60" x2="1530" y2="260">
                    <stop offset="0" stopColor="#000" />
                    <stop offset="1" stopColor="#fff" />
                </linearGradient>
                <mask id="skyMask">
                    <rect x="197" y="100" width="1723" height="1030" fill="url(#fade)" />
                </mask>
                <radialGradient id="corner" gradientUnits="userSpaceOnUse" cx="1900" cy="200" r="330">
                    <stop offset="0" stopColor="#f4f3f5" stopOpacity=".75" />
                    <stop offset="1" stopColor="#f4f3f5" stopOpacity="0" />
                </radialGradient>
                <linearGradient id="peg">
                    <stop offset="0" stopColor="#4c4d58" />
                    <stop offset=".5" stopColor="#5f616f" />
                    <stop offset="1" stopColor="#8b8da0" />
                </linearGradient>
                <linearGradient id="cylL" gradientUnits="userSpaceOnUse" x1="574" y1="552" x2="629" y2="562">
                    <stop offset="0" stopColor="#787a8d" />
                    <stop offset=".3" stopColor="#8c8fa3" />
                    <stop offset=".42" stopColor="#a3a7bb" />
                    <stop offset=".55" stopColor="#9597aa" />
                    <stop offset=".8" stopColor="#9092a4" />
                    <stop offset="1" stopColor="#818394" />
                </linearGradient>
                <linearGradient id="cylR" href="#cylL" x1="1418" y1="510" x2="1473" y2="521" />
                <linearGradient id="bore">
                    <stop offset="0" stopColor="#83859a" />
                    <stop offset="1" stopColor="#4f505b" />
                </linearGradient>
                <linearGradient id="ovalFill">
                    <stop offset="0" stopColor="#8486a0" />
                    <stop offset=".5" stopColor="#a8acc0" />
                    <stop offset="1" stopColor="#7b7d90" />
                </linearGradient>
                <clipPath id="recessL">
                    <path d="M558 425L592 419L657 416L638 512L541 517z" />
                </clipPath>
            </defs>

            <rect x="197" y="100" width="1723" height="1030" fill="url(#band)" />
            <rect x="197" y="100" width="1723" height="1030" fill="url(#sky)" mask="url(#skyMask)" />
            <rect x="1500" y="100" width="420" height="460" fill="url(#corner)" />

            <g stroke="#0c0c10" strokeWidth="1.300" strokeLinejoin="round">
                {/* side bump and corner nub behind the plate */}
                <path d="M1525 372L1541 385L1547 404L1552 429L1553 450L1548 495L1529 472z" fill={LIGHT} />
                <path d="M1529 472L1548 495Q1548 503 1524 503z" fill={DARK} />
                <path d="M1541 385L1546 404L1550 429L1550 455L1545 491" fill="none" />
                <path d="M1455 842L1453 854L1438 861L1430 858z" fill={DARK} />

                {/* hanging bowl */}
                <path d="M682 908L705 925L727 938L749 947L772 955L816 968L856 975L901 979L937 980L977 978L1022 973L1066 963L1106 953L1151 938L1191 921L1220 907L1227 902L1243 895L1268 879L1190 872z" fill="#4e4f5b" />
                <path d="M687 906L712 927L740 942L774 954L812 962L852 969L888 973L928 974L968 971L1013 966L1053 957L1093 946L1133 932L1173 915L1205 900L1238 881L1190 872z" fill={DARK} />

                {/* plate edge */}
                <path d="M1188 880L1193 884L1407 871Q1458 866 1467 823L1528 503L1533 438L1524 374L1510 345L1440 600z" fill={LIGHT} />
                <path d="M434 870Q436 917 475 919L690 908L687 900z" fill={DARK} />

                {/* plate */}
                <path
                    fill={MAIN}
                    d="M434 866L462 723L480 612L493 555L499 529L509 491L525 455L549 416L570 389L596 364L631 338L667 316L704 303L731 296L759 294L1180 273L1357 264L1383 264L1423 272L1452 284L1477 301L1497 321L1513 345L1524 374L1532 408L1533 438L1529 472L1465 817Q1456 864 1407 868L1188 880L1120 911L1066 929L1010 943L955 951L899 954L845 952L794 943L740 928L688 906L475 916Q446 914 436 893Q431 882 434 866z"
                />
                <path fill="none" d="M702 895L745 916L794 932L845 941L901 944L955 942L1013 933L1068 918L1124 897L1178 872" />
                <path fill="none" d="M593 809L618 831L642 853L662 869M637 844L1268 812M1322 763L1321 773L1268 812L1256 822L1212 851" />

                {/* slot */}
                <path d="M714 713L1236 687L1233 702L728 727z" fill={DARK} />
                <path d="M728 727L804 723L799 747L755 750z" fill="#656675" />
                <path d="M804 723L808 723L804 747L799 747z" fill={LIGHT} />
                <path d="M808 723L1233 702L1229 726L804 747z" fill="#eff0f5" />
                <path d="M755 750L1229 726L1233 702" fill="none" />
                <path d="M1229 726L1330 721L1322 763L1269 766z" fill={DARK} />
                <ellipse cx="1274" cy="750" rx="10" ry="5" fill="url(#ovalFill)" />
                <path d="M603 757L707 752L747 791L665 795L648 781L627 782z" fill={DARK} />
                <ellipse cx="712" cy="778" rx="10" ry="5" fill="url(#ovalFill)" />
                <path d="M714 713L755 750L747 791L707 752z" fill={LIGHT} />
                <path d="M603 757L627 782L618 831L593 809z" fill={LIGHT} />
                <path d="M648 781L665 795L656 842L637 844z" fill={LIGHT} />
                <path d="M608 782L618 792L615 806L605 796z" fill="#6b6c7a" />
                <path d="M605 796L610 792L617 792M610 792L615 806" fill="none" />

                {/* left recess */}
                <path d="M558 425L592 419L657 416L638 512L541 517z" fill={MAIN} />
                <path d="M558 425L583 451L572 515L541 517z" fill={LIGHT} />
                <path d="M592 419L657 416L651 443L617 445z" fill={DARK} />
                <g clipPath="url(#recessL)">
                    <circle cx="636" cy="485" r="37" fill={MAIN} />
                    <ellipse cx="638" cy="484" rx="32" ry="29" fill="url(#bore)" />
                    <ellipse cx="655" cy="497" rx="35" ry="29" fill="#eceef4" />
                    <path d="M613 514L620 507L626 514zM633 514L634 508L642 503L642 514z" fill="#4f505b" />
                    <path d="M633 448L643 457L643 464L633 456z" fill={LIGHT} />
                    <path d="M645 448L651 448L649 457L644 455zM643 464L650 463" fill={DARK} />
                </g>
                <path d="M657 416L638 512L541 517" fill="none" />

                {/* left pocket */}
                <path d="M543 522L642 517L577 852L479 857z" fill="#6e7080" />
                <path d="M547 526L637 521L627 572Q592 570 574 552z" fill={DARK} />
                <path d="M547 526L574 552L517 851L482 853z" fill={LIGHT} />
                <path d="M574 552Q592 570 627 572L574 848L517 851z" fill="url(#cylL)" />
                <path d="M547 526L637 521L574 848L482 853z" fill="none" />

                {/* right recess */}
                <path d="M1412 378L1475 374L1503 403L1491 469L1393 474z" fill={MAIN} />
                <path d="M1412 378L1475 374L1500 399L1437 402z" fill={DARK} />
                <path d="M1412 378L1437 402L1436 410L1417 454L1417 473L1393 474z" fill={LIGHT} />
                <path d="M1477 413L1488 425Q1500 446 1482 469L1449 471L1473 459z" fill="#7a7c8e" />
                <path d="M1449 407Q1425 414 1420 429L1417 454L1428 471L1449 471Q1474 463 1482 440Q1488 412 1462 406L1461 413L1449 415z" fill={MAIN} />
                <path d="M1449 415Q1422 424 1422 446Q1424 460 1437 465L1437 472L1448 471L1449 466Q1476 456 1476 432Q1476 416 1461 413z" fill="url(#bore)" />
                <path d="M1476 426Q1458 426 1447 436Q1433 448 1436 462L1443 471L1449 471L1449 466Q1476 456 1476 432z" fill="#dbdfe9" />
                <path d="M1449 407L1460 416L1458 422L1448 415z" fill={LIGHT} />
                <path d="M1460 416L1470 422L1458 422z" fill={DARK} />

                {/* right pocket */}
                <path d="M1387 479L1485 475L1420 810L1323 814z" fill="#6e7080" />
                <path d="M1391 483L1481 479L1471 529Q1440 526 1418 510z" fill={DARK} />
                <path d="M1391 483L1418 510L1360 809L1327 811z" fill={LIGHT} />
                <path d="M1418 510Q1440 526 1471 529L1417 806L1360 809z" fill="url(#cylR)" />
                <path d="M1391 483L1481 479L1417 806L1327 811z" fill="none" />
                <path d="M1347 744L1357 754L1355 769L1345 759z" fill="#5a5b68" />
                <path d="M1345 759L1353 755L1347 748M1353 755L1352 765" fill="none" />
            </g>

            <Peg x={564} y={403} dx={36} dy={37} />
            <Peg x={874} y={298} />
            <Peg x={1209} y={281} />
            <Peg x={1482} y={357} dx={15} dy={14} />
            <path d="M1512 368L1503 403L1478 376L1488 370z" fill="#686a79" />
            <path d="M1493 371L1512 366L1503 403L1473 374z" fill="url(#peg)" />
            <path d="M1512 366L1503 403L1473 374" fill="none" stroke="#0c0c10" strokeWidth="1.300" />
            <Peg x={466} y={740} />
            <Peg x={1450} y={690} />
            <Peg x={679} y={872} dx={36} dy={33} />
            <Peg x={1181} y={847} dx={12} dy={11} />
            {/* ring face passes in front of the lower left peg */}
            <path d="M688 906L694 899L702 895L745 916L740 928z" fill={MAIN} />
            <path d="M694 899L702 895L745 916M688 906L740 928" fill="none" stroke="#0c0c10" strokeWidth="1.300" />

            {/* axis triad */}
            <g strokeWidth="4" fontSize="11" className="font-['Liberation_Sans',sans-serif]">
                <path d="M237 1067L249 1078" stroke="#14148c" />
                <path d="M252 1081L241 1078L248 1072z" fill="#14148c" />
                <path d="M237 1067L220 1069" stroke="#a31515" />
                <path d="M210 1069L221 1064V1074z" fill="#8a1010" />
                <path d="M237 1068L241 1048" stroke="#1b6b1b" />
                <path d="M242 1040L246 1052L236 1050z" fill="#145214" />
                <text x="243" y="1040" textAnchor="middle" fill="#0a8a0a">Y</text>
                <text x="207" y="1073" textAnchor="middle" fill="#e01010">X</text>
                <text x="251" y="1087" textAnchor="middle" fill="#1010e0">Z</text>
            </g>
        </svg>
    )
}

const viewTools: { icon: string; menu?: boolean }[] = [
    { icon: "zoomFit" },
    { icon: "zoomArea" },
    { icon: "prevView" },
    { icon: "section" },
    { icon: "viewOrient", menu: true },
    { icon: "displayStyle", menu: true },
    { icon: "glasses", menu: true },
    { icon: "ball" },
    { icon: "scene", menu: true },
    { icon: "monitor", menu: true },
]

const paneTabs = ["forum", "home", "library", "folder", "palette", "ball", "props"]

function Viewport() {
    return (
        <main className="relative min-w-0 flex-1 overflow-hidden bg-white">
            <Model />

            <div className="absolute top-[6px] left-[722px] flex items-center gap-[7px]">
                {viewTools.map(tool => (
                    <button key={tool.icon} aria-label={tool.icon} className="flex items-center gap-[4px]">
                        <Icon name={tool.icon} />
                        {tool.menu && <Caret />}
                    </button>
                ))}
            </div>

            <div className="absolute top-[7px] right-[10px] flex gap-[7px] text-[#85878f]">
                {["paneLeft", "paneRight", "min", "restore", "close"].map(name => (
                    <button key={name} aria-label={name}><Icon name={name} /></button>
                ))}
            </div>

            <div className="absolute top-[60px] right-0 flex flex-col">
                {paneTabs.map(tab => (
                    <button
                        key={tab}
                        aria-label={tab}
                        className={`flex h-6 w-6 items-center justify-center rounded-l-[3px] border border-r-0 border-[#6d6f8c] ${tab === "home" ? "bg-[#eceef5]" : "bg-[#b0b3c8]"}`}
                    >
                        <Icon name={tab} />
                    </button>
                ))}
            </div>
        </main>
    )
}

const ribbonTabs: [string, string][] = [
    ["Features", "w-[66px]"],
    ["Sketch", "w-[57px]"],
    ["Evaluate", "w-[63px]"],
    ["DimXpert", "w-[67px]"],
    ["Office Products", "w-[98px]"],
]

function RibbonTabs() {
    return (
        <nav className="relative z-10 flex h-[20px] w-max items-start font-['Liberation_Sans',sans-serif] text-[12px] leading-[16px]">
            {ribbonTabs.map(([label, width], i) => (
                <button
                    key={label}
                    className={`border-r-2 border-b-2 border-[#5b5c70] text-center ${width} ${i === 0 ? "-mt-[2px] h-[22px] bg-[#e9eaf1] font-bold text-[#222]" : "h-[19px] bg-[#b4b6c9] text-[#55565f]"}`}
                >
                    {label}
                </button>
            ))}
        </nav>
    )
}

const navArrows = ["M2 1v8M9 1L4 5l5 4z", "M7 1L2 5l5 4z", "M3 1l5 4-5 4z", "M1 1l5 4-5 4zM8 1v8"]

function BottomBars() {
    return (
        <footer>
            <div className="flex h-[16px] items-start border-t border-black bg-[#e1e4eb] font-['Liberation_Sans',sans-serif] text-[12px] leading-[12px] text-[#222]">
                <div className="flex pl-[3px]">
                    {navArrows.map(d => (
                        <button key={d} aria-label="Scroll tabs" className="flex h-[14px] w-4 items-center justify-center border border-[#9a9cb4] bg-[#b2b5c8]">
                            <svg width="10" height="10" viewBox="0 0 10 10"><path d={d} fill="#8b8da8" stroke="#8b8da8" /></svg>
                        </button>
                    ))}
                </div>
                <button className="ml-px h-[15px] w-[55px] border-x-2 border-b-2 border-[#5b5c70] bg-[#e9eaf1] font-bold">Model</button>
                <button className="h-[14px] w-[103px] border-r-2 border-b-2 border-[#5b5c70] bg-[#b4b6c9] pr-[6px]">Motion Study 1</button>
            </div>
            <div className="flex h-[18px] items-center border-t border-[#5b5c70] bg-linear-to-b from-[#cdd0e2] to-[#b2b4c8] pl-[2px] font-['Roboto',sans-serif] text-[12px] text-[#111]">
                <span className="flex-1">SolidWorks Premium 2013 x64 Edition</span>
                <span className="flex h-full w-[72px] items-center justify-center border-x border-[#dadbe6]">Editing Part</span>
                <span className="ml-[7px] h-full border-x border-[#dadbe6] pl-[7px]" />
                <span className="flex w-[73px] items-center justify-end gap-[9px]">
                    MMGS
                    <span className="border-x-[3px] border-b-[3px] border-x-transparent border-b-[#444]" />
                </span>
                <button aria-label="Help" className="ml-[17px] h-[13px] w-[13px] border border-[#4a5a80] bg-white text-center text-[11px] leading-[11px] font-bold text-[#11a02a]">?</button>
                <button aria-label="Tags" className="mr-[6px] ml-[51px]"><Icon name="tag" size={15} /></button>
            </div>
        </footer>
    )
}

export default function App() {
    return (
        <div className="flex h-screen w-full flex-col overflow-hidden bg-white font-['DejaVu_Sans_Condensed','Open_Sans',sans-serif]">
            <TitleBar />
            <Ribbon />
            <div className="flex min-h-0 flex-1">
                <aside className="flex w-[197px] shrink-0 flex-col">
                    <RibbonTabs />
                    <FeatureManager />
                </aside>
                <Viewport />
            </div>
            <BottomBars />
        </div>
    )
}
